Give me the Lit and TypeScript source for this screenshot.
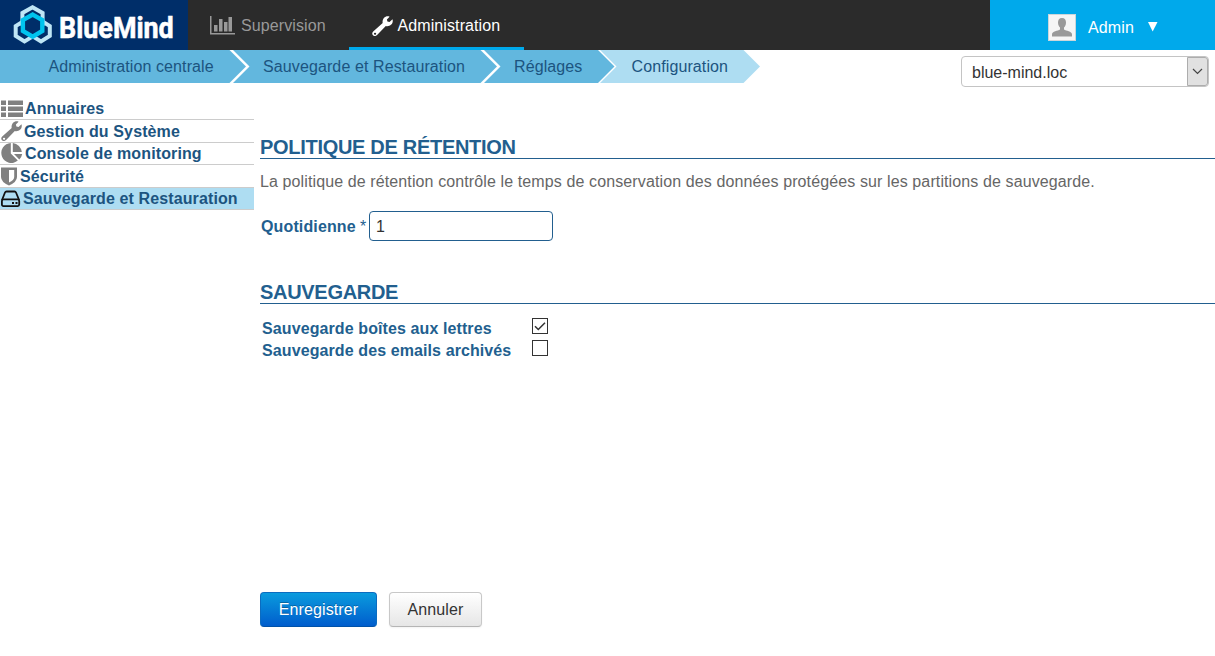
import { LitElement, html, css, svg, TemplateResult } from "lit";
import { customElement, state } from "lit/decorators.js";

const wrench = svg`<path fill="currentColor" fill-rule="evenodd" d="M13.600 .700C15 .100 16.600 .100 17.600 .700L14.900 3.500L15.400 5.600L17.500 6.100L20.500 3.300C21.100 5 20.700 7.200 19.200 8.600C17.800 10 15.800 10.600 13.800 10.100L5.100 19.100C3.900 20.300 2.100 20.400 1 19.300C-.100 18.200 0 16.500 1.200 15.400L10.700 7.100C10.100 4.500 11.300 1.700 13.600 .700ZM3 16.700a1 1 0 1 0 .1 0Z"/>`;

interface Section {
  label: string;
  icon: TemplateResult;
  width: number;
}

const sections: Section[] = [
  {
    label: "Annuaires", width: 25,
    icon: html`<svg width="23" height="18" viewBox="0 0 23 18" fill="#808080"><path d="M1 .5h5v4.500H1zM8 .5h15v4.500H8zM1 6.500h5v4.500H1zM8 6.500h15v4.500H8zM1 12.500h5v4.500H1zM8 12.500h15v4.500H8z"/></svg>`,
  },
  {
    label: "Gestion du Système", width: 24,
    icon: html`<svg width="22" height="20" viewBox="-1 0 22 20" color="#808080">${wrench}</svg>`,
  },
  {
    label: "Console de monitoring", width: 25,
    icon: html`<svg width="23" height="21" viewBox="0 0 23 21" fill="#808080"><path d="M10.800 0V10.500L17.800 17.600A10 10 0 1 1 10.800 0Z"/><path d="M12.800 0A10 10 0 0 1 21.800 9H12.800Z"/><path d="M14 11H22.200A10 10 0 0 1 19.300 16.500Z"/></svg>`,
  },
  {
    label: "Sécurité", width: 20,
    icon: html`<svg width="18" height="19" viewBox="0 0 18 19"><path fill="#808080" fill-rule="evenodd" d="M1 .500H17V10Q17 15 9 18.500Q1 15 1 10ZM9 3V15.500Q14.200 13 14.200 10V3Z"/></svg>`,
  },
  {
    label: "Sauvegarde et Restauration", width: 23,
    icon: html`<svg width="21" height="18" viewBox="0 0 21 18" fill="none" stroke="#111" stroke-width="1.800"><path d="M2 10L5 2.500Q5.400 1.500 6.500 1.500H14.500Q15.600 1.500 16 2.500L19.100 10"/><rect x="1.900" y="9.400" width="17.300" height="6.700" rx="1.500"/><path d="M12 13h2M15.500 13h2"/></svg>`,
  },
];

const steps = [
  { label: "Administration centrale", cls: "s1" },
  { label: "Sauvegarde et Restauration", cls: "s2" },
  { label: "Réglages", cls: "s3" },
  { label: "Configuration", cls: "s4" },
];

@customElement("app-root")
export class AppRoot extends LitElement {
  @state() private active = 4;
  @state() private mailboxes = true;
  @state() private archived = false;

  static styles = css`
    :host { display: block; height: 656px; overflow: hidden; background: #fff; font: 16px/20px "Liberation Sans", Arial, sans-serif; color: #333; }
    * { box-sizing: border-box; }
    svg { display: block; flex: none; }
    .top { display: flex; height: 50px; background: #2b2b2b; }
    .logo { width: 188px; background: #002e69; }
    .logo svg { overflow: visible; }
    .logo text { font: bold 30px Roboto, sans-serif; fill: #fff; stroke: #fff; stroke-width: .6px; }
    .tab { display: flex; height: 50px; align-items: center; color: #999; letter-spacing: .1px; white-space: nowrap; }
    .tab.sup { width: 161px; padding: 2px 0 0 22px; gap: 5px; }
    .tab.sup svg { margin-top: -3px; }
    .tab.adm { width: 175px; padding: 5px 0 0 22.500px; gap: 5px; color: #fff; border-bottom: 3px solid #00a9eb; }
    .user { display: flex; align-items: center; width: 225px; margin-left: auto; padding: 4px 0 0 58px; background: #00a9eb; color: #fff; }
    .user .name { width: 68px; padding: 2px 0 0 12px; letter-spacing: .15px; }
    .sub { display: flex; justify-content: space-between; height: 47px; }
    .crumbs { display: flex; height: 33px; color: #1c5480; letter-spacing: .11px; }
    .step { height: 33px; line-height: 33px; white-space: nowrap; background: #62b7de;
      clip-path: polygon(0 0, calc(100% - 16.500px) 0, 100% 50%, calc(100% - 16.500px) 100%, 0 100%, 16.500px 50%); }
    .s1 { width: 246px; padding-left: 48.500px; clip-path: polygon(0 0, calc(100% - 16.500px) 0, 100% 50%, calc(100% - 16.500px) 100%, 0 100%); }
    .s2 { width: 264px; margin-left: -13px; padding-left: 30px; }
    .s3 { width: 130.500px; margin-left: -13px; padding-left: 30px; }
    .s4 { width: 160px; margin-left: -14.500px; padding-left: 31.500px; background: #aeddf2; }
    .domain { display: flex; width: 248px; height: 31px; margin: 6px 6px 0 0; border: 1px solid #c4c4c4; border-radius: 4px; }
    .domain span { flex: 1; padding: 6px 0 0 10px; }
    .drop { display: grid; place-items: center; width: 21px; background: #e1e1e1; border: 1px solid #adadad; border-radius: 0 3px 3px 0; }
    .body { display: flex; }
    .side { width: 254px; flex: none; padding-top: .5px; }
    .row { display: flex; align-items: center; height: 22.500px; border-bottom: 1px solid #ccc; color: #1c5480; font-weight: bold; letter-spacing: .12px; white-space: nowrap; cursor: pointer; }
    .row.on { background: #aeddf2; }
    .row .ic { display: flex; flex: none; padding-top: 1px; }
    .row .lb { padding-top: 1.600px; }
    .main { flex: 1; padding-left: 6px; color: #225f8f; }
    h2 { margin: 0; height: 24px; border-bottom: 1px solid #225f8f; font-size: 20px; line-height: 25px; letter-spacing: -.3px; text-transform: uppercase; }
    .first { margin-top: 38px; }
    .desc { margin: 13px 0 0; color: #666; letter-spacing: .113px; white-space: nowrap; }
    .field { display: flex; align-items: center; height: 30px; margin: 19px 0 39px 1px; }
    .field b { width: 99px; padding-top: 2px; letter-spacing: .13px; }
    .field i { width: 9px; padding-top: 1px; font-style: normal; }
    .box { width: 184px; height: 30px; padding: 1px 0 0 6px; border: 1px solid #225f8f; border-radius: 4px; font: inherit; color: #333; outline: none; }
    .opts { display: grid; grid-template-columns: 270px 16px; grid-auto-rows: 22px; margin: 13px 0 0 2px; font-weight: bold; letter-spacing: .1px; }
    .opts span { padding-top: 2px; }
    .check { width: 16px; height: 16px; margin-top: 1px; border: 1px solid #333; background: #fff; }
    .actions { display: flex; gap: 12px; margin-top: 231px; }
    button { height: 35px; padding: 0; border-radius: 4px; font: inherit; letter-spacing: .1px; }
    .save { width: 117px; color: #fff; border: 1px solid #0b6cc0; border-bottom-color: #0052a8; background: linear-gradient(#0a9bdd, #005dcd); text-shadow: 0 -1px 0 rgba(0,0,0,.25); }
    .cancel { width: 93px; color: #333; border: 1px solid #c8c8c8; border-bottom-color: #b5b5b5; background: linear-gradient(#fff, #e6e6e6); box-shadow: 0 1px 2px rgba(0,0,0,.05); }
  `;

  private check(on: boolean, flip: () => void) {
    return html`<div class="check" @click=${flip}>
      ${on ? html`<svg width="14" height="14" viewBox="0 0 14 14" fill="none" stroke="#333" stroke-width="1.500"><path d="M2 7.200L5.300 10.500L12 3.800"/></svg>` : ""}
    </div>`;
  }

  render() {
    return html`
      <header class="top">
        <div class="logo">
          <svg width="188" height="50" viewBox="0 0 188 50">
            <g fill="none" stroke-width="4">
              <g stroke="#bfe6f6">
                <path d="M32.500 7.200L42.600 13V24.500L32.500 30.500L22.400 24.500V13Z"/>
                <path d="M24.500 20.500L33.500 26V36L24.500 41.500L15.700 36V26Z"/>
                <path d="M41 20.500L49.800 26V36L41 41.500L32 36V26Z"/>
              </g>
              <path fill="#002e69" stroke="#00c4ee" stroke-width="4.400" d="M32.700 14.600L42.300 20V31L32.700 36.600L22.900 31V20Z"/>
            </g>
            <text transform="translate(59 37.500) scale(.897 1)">BlueMind</text>
          </svg>
        </div>
        <div class="tab sup">
          <svg width="26" height="20" viewBox="0 0 26 20" fill="#999"><path d="M0 1h1.500v17H25v1.500H0zM4 10h3.500v6.500H4zM9 4h3.500v12.500H9zM14 7h3.500v9.500H14zM18.500 2H22v14.500h-3.500z"/></svg>
          <span>Supervision</span>
        </div>
        <div class="tab adm">
          <svg width="21" height="20" viewBox="0 0 21 20">${wrench}</svg>
          <span>Administration</span>
        </div>
        <div class="user">
          <svg width="28" height="27" viewBox="0 0 28 27"><rect x=".5" y=".5" width="27" height="26" fill="#f5f5f5" stroke="#ccd6da"/><path fill="#999" d="M14 4C16.800 4 18 6 18 8.500C18 11 17 12.500 16 13.500V15.500C18 17 24 17 24 20.500V22.500H4V20.500C4 17 10 17 12 15.500V13.500C11 12.500 10 11 10 8.500C10 6 11.200 4 14 4Z"/></svg>
          <span class="name">Admin</span>
          <svg width="18" height="14" viewBox="0 0 18 14"><path fill="#fff" d="M4 2H13.500L8.700 11.500Z"/></svg>
        </div>
      </header>
      <div class="sub">
        <nav class="crumbs">${steps.map((s) => html`<div class="step ${s.cls}">${s.label}</div>`)}</nav>
        <div class="domain"><span>blue-mind.loc</span>
          <div class="drop"><svg width="11" height="7" viewBox="0 0 11 7" fill="none" stroke="#444" stroke-width="1.200"><path d="M1 1L5.500 5.500L10 1"/></svg></div>
        </div>
      </div>
      <div class="body">
        <nav class="side">
          ${sections.map((s, i) => html`<div class="row ${i === this.active ? "on" : ""}" @click=${() => (this.active = i)}>
            <span class="ic" style="width:${s.width}px">${s.icon}</span><span class="lb">${s.label}</span>
          </div>`)}
        </nav>
        <main class="main">
          <h2 class="first">Politique de rétention</h2>
          <p class="desc">La politique de rétention contrôle le temps de conservation des données protégées sur les partitions de sauvegarde.</p>
          <div class="field"><b>Quotidienne</b><i>*</i><input class="box" .value=${"1"} /></div>
          <h2>Sauvegarde</h2>
          <div class="opts">
            <span>Sauvegarde boîtes aux lettres</span>${this.check(this.mailboxes, () => (this.mailboxes = !this.mailboxes))}
            <span>Sauvegarde des emails archivés</span>${this.check(this.archived, () => (this.archived = !this.archived))}
          </div>
          <div class="actions"><button class="save">Enregistrer</button><button class="cancel">Annuler</button></div>
        </main>
      </div>
    `;
  }
}
